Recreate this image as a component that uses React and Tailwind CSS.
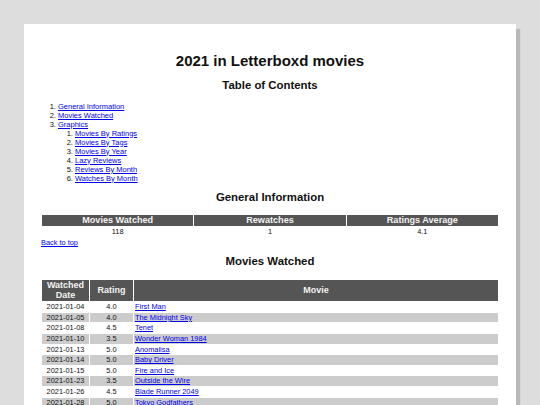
const toc = [
  { label: 'General Information' },
  { label: 'Movies Watched' },
  {
    label: 'Graphics',
    children: [
      'Movies By Ratings',
      'Movies By Tags',
      'Movies By Year',
      'Lazy Reviews',
      'Reviews By Month',
      'Watches By Month',
    ],
  },
];

const movies = [
  ['2021-01-04', '4.0', 'First Man'],
  ['2021-01-05', '4.0', 'The Midnight Sky'],
  ['2021-01-08', '4.5', 'Tenet'],
  ['2021-01-10', '3.5', 'Wonder Woman 1984'],
  ['2021-01-13', '5.0', 'Anomalisa'],
  ['2021-01-14', '5.0', 'Baby Driver'],
  ['2021-01-15', '5.0', 'Fire and Ice'],
  ['2021-01-23', '3.5', 'Outside the Wire'],
  ['2021-01-26', '4.5', 'Blade Runner 2049'],
  ['2021-01-28', '5.0', 'Tokyo Godfathers'],
];

function A({ children }) {
  return (
    <a href="#" className="text-[#0000ee] underline">
      {children}
    </a>
  );
}

export default function App() {
  return (
    <div
      className="min-h-screen bg-[#dddddd] px-[24px] pt-[24px] text-[#111] text-[7.4px]"
      style={{ fontFamily: '"Liberation Sans", Arial, sans-serif' }}
    >
      <div className="bg-white shadow-[4px_5px_1px_#b8b8b8] px-[17px] pt-[28px] pb-[40px]">
        <h1 className="text-center font-bold text-[15px] leading-[17px]">2021 in Letterboxd movies</h1>
        <h2 className="mt-[9.5px] text-center font-bold text-[11.4px] leading-[13px]">Table of Contents</h2>

        {/* table of contents */}
        <ol className="mt-[10px] list-decimal pl-[17px] text-[7.5px] leading-[9px]">
          {toc.map((item) => (
            <li key={item.label}>
              <A>{item.label}</A>
              {item.children && (
                <ol className="list-decimal pl-[17px]">
                  {item.children.map((c) => (
                    <li key={c}>
                      <A>{c}</A>
                    </li>
                  ))}
                </ol>
              )}
            </li>
          ))}
        </ol>

        <h2 className="mt-[8.2px] text-center font-bold text-[11.4px] leading-[13px]">General Information</h2>
        <table className="mt-[10px] w-full table-fixed border-collapse">
          <thead>
            <tr className="bg-[#555555] text-[#f2f2f2]">
              <th className="border border-white p-0 text-[9.1px] leading-[11.4px] font-bold">Movies Watched</th>
              <th className="border border-white p-0 text-[9.1px] leading-[11.4px] font-bold">Rewatches</th>
              <th className="border border-white p-0 text-[9.1px] leading-[11.4px] font-bold">Ratings Average</th>
            </tr>
          </thead>
          <tbody>
            <tr>
              <td className="border border-white p-0 text-center leading-[10px]">118</td>
              <td className="border border-white p-0 text-center leading-[10px]">1</td>
              <td className="border border-white p-0 text-center leading-[10px]">4.1</td>
            </tr>
          </tbody>
        </table>
        <div className="leading-[9px]">
          <A>Back to top</A>
        </div>

        <h2 className="mt-[8px] text-center font-bold text-[11.4px] leading-[13px]">Movies Watched</h2>
        <table className="mt-[10.5px] w-full border-collapse">
          <thead>
            <tr className="bg-[#555555] text-[#f2f2f2]">
              <th className="w-[48px] border border-white px-[1px] py-0 text-[9px] leading-[10.8px] font-bold">
                Watched Date
              </th>
              <th className="w-[44px] border border-white p-0 text-[9px] leading-[10.8px] font-bold">Rating</th>
              <th className="border border-white p-0 text-[9px] leading-[10.8px] font-bold">Movie</th>
            </tr>
          </thead>
          <tbody>
            {movies.map(([date, rating, title], i) => (
              <tr key={date} className={i % 2 === 1 ? 'bg-[#cccccc]' : 'bg-white'}>
                <td className="border border-white p-0 text-center leading-[9.6px]">{date}</td>
                <td className="border border-white p-0 text-center leading-[9.6px]">{rating}</td>
                <td className="border border-white py-0 pl-[1px] leading-[9.6px]">
                  <A>{title}</A>
                </td>
              </tr>
            ))}
          </tbody>
        </table>
      </div>
    </div>
  );
}
